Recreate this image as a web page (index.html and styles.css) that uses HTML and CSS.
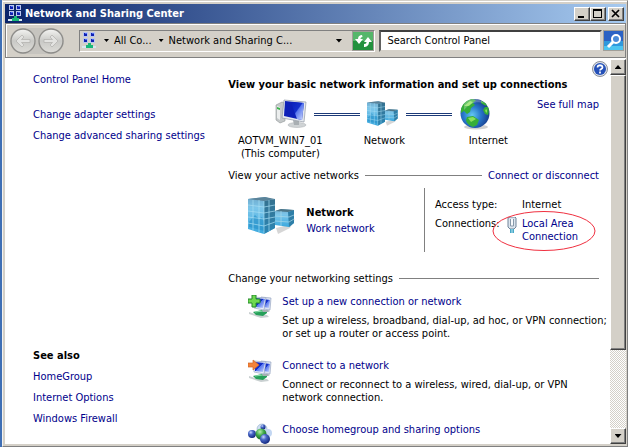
FILE: index.html
```html
<!DOCTYPE html>
<html lang="en">
<head>
<meta charset="utf-8">
<title>Network and Sharing Center</title>
<link rel="stylesheet" href="styles.css">
</head>
<body>
<svg class="defs" width="0" height="0" aria-hidden="true">
  <defs>
    <linearGradient id="screen" x1="0" y1="0" x2="1" y2="1"><stop offset="0" stop-color="#0a1fb8"/><stop offset=".45" stop-color="#1430cc"/><stop offset=".5" stop-color="#5a78ee"/><stop offset="1" stop-color="#d4e0ff"/></linearGradient>
    <linearGradient id="glass" x1="0" y1="0" x2="0" y2="1"><stop offset="0" stop-color="#6fa9cb"/><stop offset=".3" stop-color="#7cc6ea"/><stop offset="1" stop-color="#3aa8de"/></linearGradient>
    <linearGradient id="side" x1="0" y1="0" x2="0" y2="1"><stop offset="0" stop-color="#35718f"/><stop offset="1" stop-color="#2a86b5"/></linearGradient>
    <radialGradient id="sea" cx=".4" cy=".55" r=".6"><stop offset="0" stop-color="#63c8f2"/><stop offset=".5" stop-color="#2878cc"/><stop offset="1" stop-color="#173b8c"/></radialGradient>
    <radialGradient id="ball" cx=".35" cy=".3" r=".7"><stop offset="0" stop-color="#c8d8ff"/><stop offset=".4" stop-color="#4a68c8"/><stop offset="1" stop-color="#142a80"/></radialGradient>
    <radialGradient id="gball" cx=".4" cy=".3" r=".7"><stop offset="0" stop-color="#b8f0b0"/><stop offset=".5" stop-color="#3fa848"/><stop offset="1" stop-color="#186828"/></radialGradient>
    <linearGradient id="metal" x1="0" y1="0" x2="0" y2="1"><stop offset="0" stop-color="#f4f4f2"/><stop offset=".5" stop-color="#c9c9c6"/><stop offset="1" stop-color="#deddd9"/></linearGradient>
    <symbol id="lan" viewBox="0 0 16 17">
      <path d="M2 0h5v5H2zM9 0h5v5H9zM2 6h5v5H2zM9 6h5v5H9z" fill="#b9c5ee"/>
      <path d="M3 1h3v3H3zM10 1h3v3h-3zM3 7h3v3H3zM10 7h3v3h-3z" fill="#1020b0"/>
      <path d="M4 1h2v1H4zM11 1h2v1h-2zM4 7h2v1H4zM11 7h2v1h-2z" fill="#4c6af0"/>
      <path d="M1 14h14v2H1z" fill="#d8e8f0"/><path d="M7 11h3v2h2v3H5v-3h2z" fill="#18b878"/>
    </symbol>
    <symbol id="building" viewBox="0 0 48 40">
      <path d="M28 31l8-2 11-7-5 9-12 6z" fill="#777" opacity=".3"/>
      <path d="M27 14l6-2 13 1v13l-5 4-14-2z" fill="url(#glass)"/>
      <path d="M40 15l6-2v13l-5 4z" fill="#2f7fa8"/><path d="M27 14l6-2 13 1-6 2z" fill="#4d7688"/>
      <path d="M27 19l14 1 5-2M27 24l14 1 5-3M33 14v15" stroke="#a7d8ea" stroke-width=".7" fill="none"/>
      <path d="M0 2l17-2 10 3v28l-11 6L0 32z" fill="url(#glass)"/>
      <path d="M16 4l11-2v29l-11 6z" fill="url(#side)"/><path d="M0 2l17-2 10 2-11 2z" fill="#5b8399"/>
      <path d="M1 25l6-7 4 4 3-2 2 5v9L1 30z" fill="#238ec7" opacity=".6"/>
      <path d="M0 8l16 2 11-2M0 14l16 2 11-2M0 20l16 2 11-2M0 26l16 3 11-4M5 3v30M11 3v32M16 4v33M21 3v31" stroke="#a8def4" stroke-width=".7" fill="none"/>
    </symbol>
    <symbol id="pcs" viewBox="0 0 24 24">
      <path d="M13 2l10 1-1 12-7-1z" fill="#dce4f4" stroke="#8b9ab8" stroke-width=".6"/><path d="M15 4l7 1-1 8-6-1z" fill="url(#screen)"/>
      <path d="M6 2l12 1-2 12-10-2z" fill="#e8eefa" stroke="#8b9ab8" stroke-width=".6"/><path d="M7 3l10 1-2 9-8-1z" fill="url(#screen)"/>
      <path d="M1 17l6 2 12 1 2 2-8 1-12-4z" fill="#c9d0d1"/><path d="M5 17l9-2 5 1v2l-4 3-7-1z" fill="#26a05a"/><path d="M7 17l8-1" stroke="#8ce0ac"/><path d="M14 15h6l2 1-2 1h-5z" fill="#a5b0b3"/>
    </symbol>
  </defs>
</svg>
<div class="window">
  <header class="titlebar">
    <svg class="title-icon" aria-hidden="true"><use href="#lan"/></svg>
    <h1>Network and Sharing Center</h1>
    <div class="caption-buttons">
      <button class="bevel" aria-label="Minimize"><svg width="10" height="9" viewBox="0 0 10 9"><path d="M1 7h6v2H1z"/></svg></button>
      <button class="bevel" aria-label="Maximize"><svg width="10" height="9" viewBox="0 0 10 9"><path d="M0 0h9v9H0zM1 2v6h7V2z" fill-rule="evenodd"/></svg></button>
      <button class="bevel close" aria-label="Close"><svg width="10" height="9" viewBox="0 0 10 9"><path d="M1 1l7 7M8 1L1 8" stroke="#000" stroke-width="1.7"/></svg></button>
    </div>
  </header>

  <div class="toolbar">
    <div class="history">
      <button aria-label="Back"><svg width="26" height="26" viewBox="0 0 26 26"><circle cx="13" cy="13" r="12" fill="url(#metal)" stroke="#8d8c89" stroke-width="1.3"/><path d="M6 13l6-6 2 2-2.500 2.500H20v3h-8.500L14 17l-2 2z" fill="#e3e3e1" stroke="#b0afac" stroke-width=".7"/></svg></button>
      <button aria-label="Forward"><svg width="26" height="26" viewBox="0 0 26 26"><circle cx="13" cy="13" r="12" fill="url(#metal)" stroke="#8d8c89" stroke-width="1.3"/><path d="M20 13l-6-6-2 2 2.500 2.500H6v3h8.500L12 17l2 2z" fill="#e3e3e1" stroke="#b0afac" stroke-width=".7"/></svg></button>
    </div>
    <nav class="address" aria-label="Address">
      <svg class="lan-icon" aria-hidden="true"><use href="#lan"/></svg>
      <span class="arrow small"></span>
      <a href="#">All Co...</a>
      <span class="arrow small"></span>
      <a href="#">Network and Sharing C...</a>
      <button class="history-drop" aria-label="Previous locations"><span class="arrow"></span></button>
      <button class="refresh" aria-label="Refresh"><svg width="20" height="19" viewBox="0 0 20 19"><path d="M0 0h20v19H0z" fill="#23913e"/><path d="M0 0h20v9H0z" fill="#55b66a"/><path d="M9 3c-2 0-4 1-4 4H2l4 5 4-5H7.500c0-1 .5-2 2-2z" fill="#fff"/><path d="M11 15c2 0 5-1 5-5h3l-4-5-4 5h2.500c0 1-.5 2-2.500 2z" fill="#fff"/></svg></button>
    </nav>
    <input class="search" type="text" aria-label="Search Control Panel" value="Search Control Panel">
    <button class="search-go" aria-label="Search"><svg width="20" height="20" viewBox="0 0 20 20"><path d="M0 0h20v20H0z" fill="#2b62c4"/><path d="M0 10h20v10H0z" fill="#2f98dc"/><path d="M0 15h20v5H0z" fill="#4cc4f0"/><path d="M9 11l-5 5" stroke="#fff" stroke-width="3"/><circle cx="12" cy="8" r="4" fill="#4a8ad8" stroke="#fff" stroke-width="2"/></svg></button>
  </div>

  <div class="client">
    <aside>
      <nav class="tasks" aria-label="Tasks">
        <a href="#">Control Panel Home</a>
        <a class="first-task" href="#">Change adapter settings</a>
        <a href="#">Change advanced sharing settings</a>
      </nav>
      <nav class="also" aria-label="See also">
        <h2>See also</h2>
        <a href="#">HomeGroup</a>
        <a href="#">Internet Options</a>
        <a href="#">Windows Firewall</a>
      </nav>
    </aside>

    <main>
      <button class="help" aria-label="Help"><svg width="16" height="16" viewBox="0 0 16 16"><circle cx="8" cy="8" r="7.500" fill="#dfe3ea" stroke="#8a909c"/><circle cx="8" cy="8" r="6" fill="#2450b8"/><path d="M5 4a6 6 0 0 1 6 0l-1 2H5z" fill="#6c92e0"/><path d="M5.500 6.500c0-3 5-3 5 0 0 1.500-2.500 1.500-2.500 3M8 10.500v2" stroke="#fff" stroke-width="1.700" fill="none"/></svg></button>
      <h2 class="headline">View your basic network information and set up connections</h2>

      <section class="map" aria-label="Network map">
        <div class="map-icons">
          <svg width="32" height="32" viewBox="0 0 32 32">
            <path d="M1 7l6-3 3 1v18l-5 2-4-3z" fill="#c4c8c9" stroke="#8e9495" stroke-width=".6"/><path d="M2 8l3 1v13l-3-2z" fill="#eceeee"/><path d="M2 9l3 1v2l-3-1z" fill="#39b54a"/>
            <ellipse cx="22" cy="27" rx="9" ry="2.500" fill="#cfd3d5" stroke="#a8adb0" stroke-width=".5"/><path d="M18 22l6 1v4h-5z" fill="#a9afb3"/>
            <path d="M9 2l22 2-2 20-22-4z" fill="#e5eaf0" stroke="#929aa5" stroke-width=".7"/><path d="M10 3l19 2-2 17-18-4z" fill="#0d20b8"/><path d="M16 4l13 1-2 17-5-1z" fill="url(#screen)"/>
          </svg>
          <span class="link-line"></span>
          <svg width="32" height="32"><use href="#building" y="3" width="32" height="27"/></svg>
          <span class="link-line"></span>
          <svg width="32" height="32" viewBox="0 0 32 32">
            <ellipse cx="17" cy="29" rx="12" ry="2.500" fill="#777" opacity=".35"/>
            <circle cx="16" cy="15.500" r="14.500" fill="url(#sea)"/>
            <path d="M2 11C4 5 8 2 13 1l4 1-3 3 2 2-4 3-1 4-3 2-3-3-3 2zM22 3c3 1 5 2 6 5l-3-1-3-2zM26 9l3 0c1 3 1 5 0 8l-3-1-2-4zM8 19l6-1 6 4-2 5-4 2c-3-1-7-4-7-7z" fill="#36ae38"/>
            <path d="M5 8l6-5 3 1-4 4zM9 20l5-1 3 2-5 3zM27 11l1 1v3l-2-2z" fill="#8be05c"/><path d="M5 6a13 13 0 0 1 20-1C17 3 11 5 5 12z" fill="#fff" opacity=".25"/>
          </svg>
          <a class="full-map" href="#">See full map</a>
        </div>
        <div class="map-labels">
          <p>AOTVM_WIN7_01<br>(This computer)</p>
          <p>Network</p>
          <p>Internet</p>
        </div>
      </section>

      <div class="section-head"><h3>View your active networks</h3><hr><a href="#">Connect or disconnect</a></div>
      <section class="active">
        <svg class="place-icon" width="48" height="40" aria-hidden="true"><use href="#building"/></svg>
        <div class="place"><strong>Network</strong><a href="#">Work network</a></div>
        <dl>
          <dt>Access type:</dt><dd>Internet</dd>
          <dt>Connections:</dt>
          <dd class="connection">
            <svg class="plug" width="10" height="16" viewBox="0 0 10 16" aria-hidden="true"><path d="M1 1l2-1h5l1 1v9l-2 2H3l-2-2z" fill="#dce5ee" stroke="#718499"/><path d="M3.500 2v7h3V2" fill="#f8fafc" stroke="#8799aa"/><path d="M3 12h4v4H3z" fill="#46a8c8"/><path d="M5 12v4" stroke="#bfe6f0"/></svg>
            <a href="#">Local Area<br>Connection</a>
            <svg class="callout" width="104" height="42" viewBox="0 0 104 42" aria-hidden="true"><ellipse cx="52" cy="21" rx="51" ry="19.500" fill="none" stroke="#f03040"/></svg>
          </dd>
        </dl>
      </section>

      <div class="section-head"><h3>Change your networking settings</h3><hr></div>
      <ul class="settings">
        <li>
          <svg width="24" height="24" aria-hidden="true"><use href="#pcs"/><path d="M4 0h4v4h4v4H8v4H4V8H0V4h4z" fill="#6fd850" stroke="#25892c"/></svg>
          <div><a href="#">Set up a new connection or network</a><p>Set up a wireless, broadband, dial-up, ad hoc, or VPN connection;<br>or set up a router or access point.</p></div>
        </li>
        <li>
          <svg width="24" height="24" aria-hidden="true"><use href="#pcs"/><path d="M0 4h5V1l6 5-6 5V8H0z" fill="#f58238" stroke="#cf6928" stroke-width=".7"/></svg>
          <div><a href="#">Connect to a network</a><p>Connect or reconnect to a wireless, wired, dial-up, or VPN<br>network connection.</p></div>
        </li>
        <li>
          <svg width="24" height="24" aria-hidden="true"><circle cx="14" cy="6" r="5" fill="#cfe0f2" stroke="#8fa9cc" stroke-width=".6"/><circle cx="15" cy="4" r="2.500" fill="url(#ball)"/><circle cx="20" cy="10" r="4" fill="#c2d6f2"/><circle cx="4" cy="11" r="4" fill="url(#ball)"/><circle cx="13" cy="11" r="5.500" fill="url(#gball)"/><circle cx="17" cy="16" r="5" fill="url(#ball)"/></svg>
          <div><a href="#">Choose homegroup and sharing options</a><p>Access files and printers located on other network</p></div>
        </li>
      </ul>
    </main>

    <div class="scrollbar">
      <button class="bevel" aria-label="Scroll up"><span class="arrow up"></span></button>
      <div class="track"><div class="thumb bevel"></div></div>
      <button class="bevel" aria-label="Scroll down"><span class="arrow"></span></button>
    </div>
  </div>
</div>
</body>
</html>
```
FILE: styles.css
```css
* { box-sizing: border-box; }

body {
  margin: 0;
  height: 100vh;
  padding-left: 2px;
  background: #3f6fb5;
  color: #000;
  font: 11px/13px "DejaVu Sans Condensed", Tahoma, sans-serif;
  overflow: hidden;
}

h1, h2, h3, p, ul, dl, dd { margin: 0; padding: 0; }
h1, h2, h3 { font-size: 11px; }
a { color: #00008b; text-decoration: none; white-space: nowrap; }
button { padding: 0; border: 0; background: none; font: inherit; }
svg { display: block; flex: none; }
.defs { position: absolute; }

.window {
  height: 100%;
  display: flex;
  flex-direction: column;
  padding: 2px 1px 2px 2px;
  background: #d4d0c8;
  border: 1px solid #808080;
  border-top-color: #d4d0c8;
  border-left-color: #f4f3f0;
  box-shadow: inset 0 1px #fff;
}

.bevel {
  display: flex;
  align-items: center;
  justify-content: center;
  background: #d4d0c8;
  border: 1px solid #404040;
  border-top-color: #fff;
  border-left-color: #fff;
  box-shadow: inset -1px -1px #808080;
}

.titlebar {
  flex: none;
  display: flex;
  align-items: center;
  height: 19px;
  margin-top: 1px;
  padding: 0 2px;
  background: linear-gradient(to right, #0a246a, #a6caf0);
  color: #fff;
}
.title-icon { width: 16px; height: 17px; }
.titlebar h1 { margin-left: 2px; }
.caption-buttons { display: flex; margin-left: auto; }
.caption-buttons button { width: 16px; height: 14px; }
.caption-buttons .close { margin-left: 2px; }

.toolbar {
  flex: none;
  display: flex;
  align-items: center;
  height: 35px;
  padding: 0 1px 0 4px;
  border: 1px solid #808080;
  box-shadow: inset 1px 1px #fff;
}
.history { display: flex; gap: 2px; height: 26px; border-radius: 13px; background: #c6c4bf; }
.address {
  flex: 295 1 0;
  display: flex;
  align-items: center;
  height: 22px;
  margin-left: 15px;
  border: 1px solid #fff;
  border-top-color: #808080;
  border-left-color: #808080;
}
.address a { color: #000; }
.lan-icon { width: 16px; height: 17px; margin-left: 1px; }
.arrow { flex: none; width: 7px; height: 4px; background: #000; clip-path: polygon(0 0, 100% 0, 50% 100%); }
.arrow.small { width: 5px; height: 3px; margin: 0 5px 0 7px; }
.arrow.up { clip-path: polygon(50% 0, 100% 100%, 0 100%); }
.history-drop { display: flex; margin-left: auto; padding: 8px 10px; }
.refresh, .search-go { border: 1px solid #a09e98; }
.refresh { width: 22px; height: 20px; overflow: hidden; }
.search {
  flex: 207 1 0;
  min-width: 0;
  height: 22px;
  margin: 0 1px 0 4px;
  padding: 0 6px;
  border: 2px solid #d4d0c8;
  border-top-color: #404040;
  border-left-color: #606060;
  background: #fff;
  color: #000;
  font: inherit;
}
.search-go { flex: none; width: 21px; height: 21px; overflow: hidden; }

.client { flex: 1; min-height: 0; display: flex; background: #fff; }
aside {
  flex: 195 1 0;
  display: flex;
  flex-direction: column;
  justify-content: space-between;
  padding: 15px 0 19px 28px;
}
aside nav { display: flex; flex-direction: column; align-items: flex-start; gap: 8px; }
.first-task { margin-top: 14px; }

main { position: relative; flex: 370 1 0; min-width: 0; overflow: hidden; padding: 20px 11px 0 0; }
.help { position: absolute; top: 3px; right: 2px; }
.headline { white-space: nowrap; }

.map { margin-top: 7px; }
.map-icons { display: flex; align-items: flex-start; gap: 7px; padding-left: 47px; }
.link-line { flex: none; width: 46px; height: 3px; margin-top: 15px; border: solid #1c3a78; border-width: 1px 0; }
.full-map { margin-left: auto; }
.map-labels { display: flex; margin-top: 4px; text-align: center; }
.map-labels p { flex: none; width: 104px; white-space: nowrap; }

.section-head { display: flex; align-items: center; gap: 6px; margin-top: 9px; }
.section-head h3 { font-weight: normal; white-space: nowrap; }
.section-head hr { flex: 1; margin: 0; border: 0; border-top: 1px solid #808080; }

.active { display: flex; align-items: flex-start; margin-top: 6px; padding-left: 20px; }
.place-icon { margin-top: 9px; }
.place { display: flex; flex-direction: column; gap: 3px; margin: 18px 0 0 10px; }
.active dl {
  display: grid;
  grid-template-columns: 72px 92px;
  gap: 6px 0;
  align-content: start;
  height: 64px;
  margin-left: auto;
  padding: 10px 0 0 10px;
  border-left: 1px solid #808080;
}
.active dt { white-space: nowrap; }
.active dd { padding-left: 15px; }
.active .connection { position: relative; display: flex; gap: 5px; padding-left: 0; }
.callout { position: absolute; top: -7px; left: -15px; pointer-events: none; }

.active + .section-head { margin-top: 20px; }
.settings { display: flex; flex-direction: column; gap: 19px; margin-top: 10px; padding-left: 20px; list-style: none; }
.settings li { display: flex; gap: 10px; }
.settings p { margin-top: 6px; white-space: nowrap; }

.scrollbar { flex: none; display: flex; flex-direction: column; width: 16px; padding-top: 1px; }
.scrollbar button { flex: none; height: 16px; }
.track { flex: 1; background: repeating-conic-gradient(#d4d0c8 0 25%, #fff 0 50%) 0 0 / 2px 2px; }
.thumb { height: 78%; }
```
